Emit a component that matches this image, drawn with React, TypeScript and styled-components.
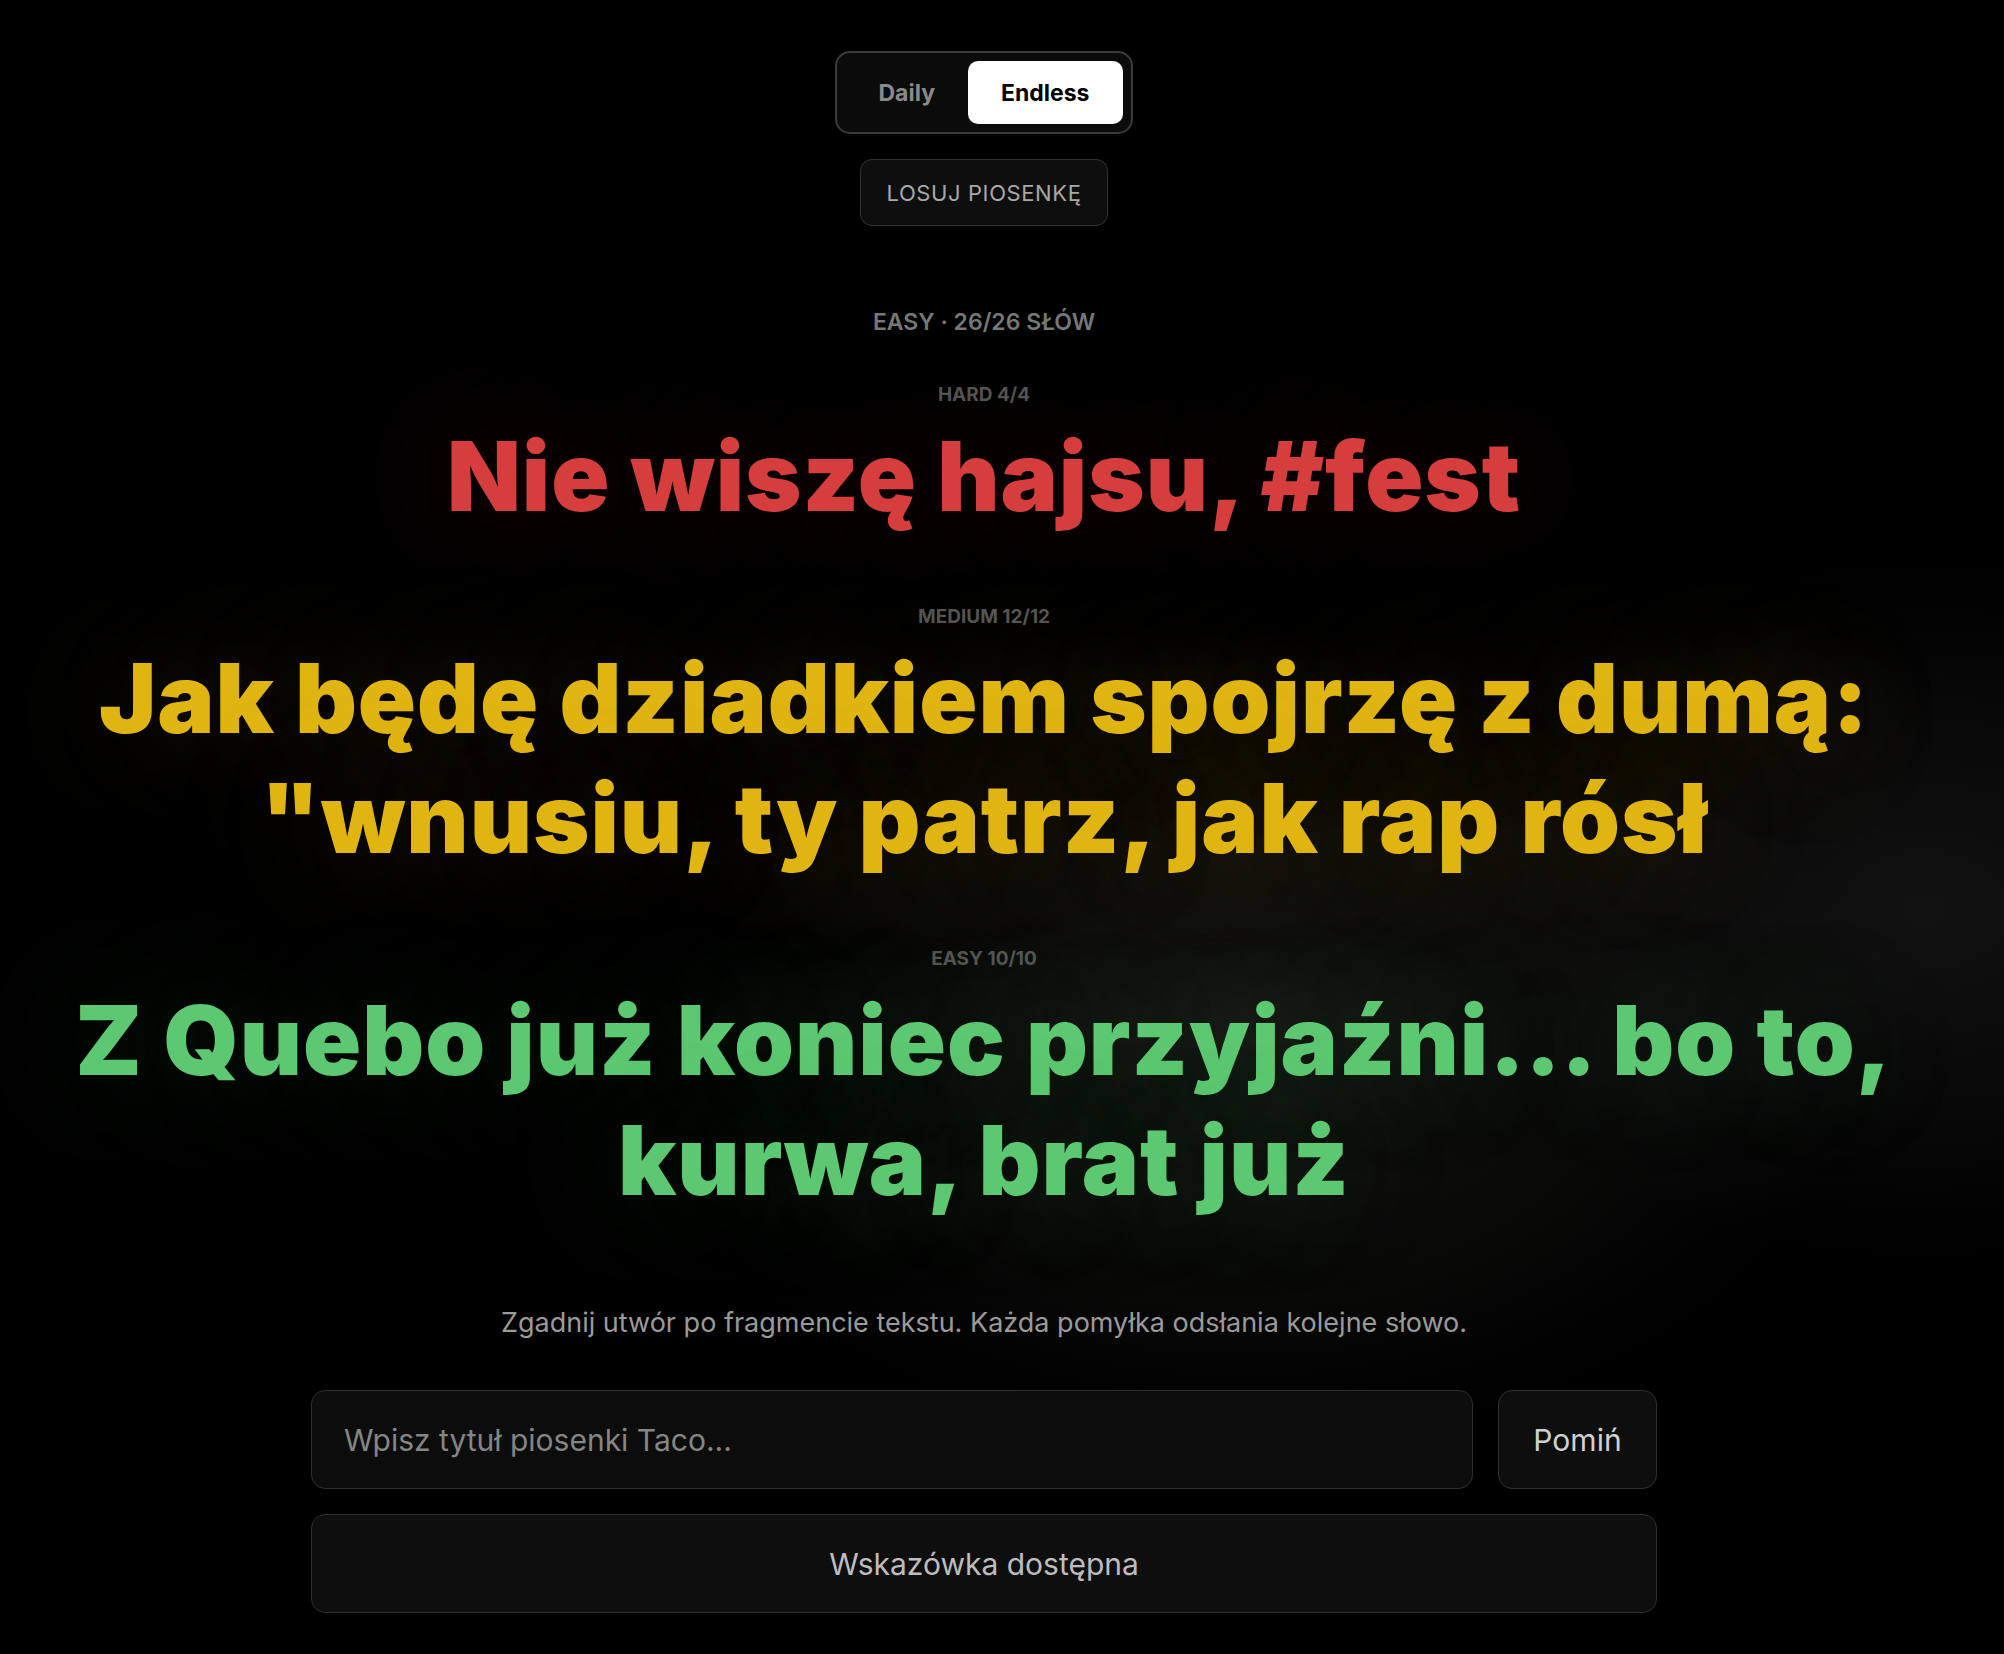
import styled, { createGlobalStyle } from 'styled-components';

const GlobalStyle = createGlobalStyle`
  html, body {
    margin: 0;
    padding: 0;
    background: #000;
  }
  body {
    font-family: Inter, "Noto Sans", sans-serif;
    color: #fff;
  }
`;

const Page = styled.main`
  min-height: 100vh;
  box-sizing: border-box;
  padding: 51px 36px 40px 0;
  display: flex;
  flex-direction: column;
  align-items: center;
  background:
    radial-gradient(ellipse 900px 600px at 62% 62%, rgba(40, 40, 36, 0.55), transparent 70%),
    radial-gradient(ellipse 700px 500px at 96% 55%, rgba(30, 30, 30, 0.6), transparent 70%),
    #000;
`;

const ModeSwitch = styled.div`
  display: flex;
  padding: 8px;
  border: 2px solid #3a3a3a;
  border-radius: 15px;
  background: #0b0b0b;
`;

const ModeButton = styled.button<{ $active?: boolean }>`
  height: 63px;
  padding: 0 33px;
  border: none;
  border-radius: 10px;
  font-family: Inter, sans-serif;
  font-size: 23px;
  font-weight: 700;
  cursor: pointer;
  background: ${({ $active }) => ($active ? '#fff' : 'transparent')};
  color: ${({ $active }) => ($active ? '#000' : '#8a8a8a')};
`;

const ShuffleButton = styled.button`
  margin-top: 25px;
  height: 67px;
  padding: 0 26px;
  border: 1.5px solid #333;
  border-radius: 12px;
  background: #0e0e0e;
  color: #a8a8a8;
  font-family: Inter, sans-serif;
  font-size: 22px;
  font-weight: 400;
  letter-spacing: 0.6px;
`;

const Summary = styled.div`
  margin-top: 82px;
  font-size: 23px;
  line-height: 29px;
  font-weight: 600;
  color: #777;
  text-transform: uppercase;
`;

const Lines = styled.div`
  margin-top: 46px;
  display: flex;
  flex-direction: column;
  align-items: center;
  gap: 69px;
  max-width: 1820px;
`;

const Section = styled.section`
  display: flex;
  flex-direction: column;
  align-items: center;
  gap: 10px;
`;

const Level = styled.div`
  font-size: 19px;
  line-height: 23px;
  font-weight: 700;
  color: #555;
  text-transform: uppercase;
`;

const Lyric = styled.div<{ $color: string }>`
  font-family: Inter, sans-serif;
  font-size: 96px;
  line-height: 120px;
  font-weight: 900;
  letter-spacing: 1px;
  text-align: center;
  color: ${({ $color }) => $color};
  text-shadow: 0 0 120px ${({ $color }) => $color}40;
`;

const Hint = styled.p`
  margin: 83px 0 0;
  font-size: 27px;
  line-height: 39px;
  color: #9a9a9a;
`;

const Form = styled.div`
  margin-top: 48px;
  width: 1346px;
  display: flex;
  flex-direction: column;
  gap: 25px;
`;

const Row = styled.div`
  display: flex;
  gap: 25px;
`;

const GuessInput = styled.input`
  flex: 1;
  height: 99px;
  box-sizing: border-box;
  padding: 0 32px;
  border: 1.5px solid #2e2e2e;
  border-radius: 14px;
  background: #0c0c0c;
  color: #ddd;
  font-family: Inter, sans-serif;
  font-size: 30px;
  outline: none;

  &::placeholder {
    color: #858585;
  }
`;

const ActionButton = styled.button<{ $wide?: boolean }>`
  height: 99px;
  box-sizing: border-box;
  width: ${({ $wide }) => ($wide ? '100%' : '159px')};
  border: 1.5px solid #2e2e2e;
  border-radius: 14px;
  background: #0e0e0e;
  color: ${({ $wide }) => ($wide ? '#bdbdbd' : '#d0d0d0')};
  font-family: Inter, sans-serif;
  font-size: 30px;
  font-weight: 400;
`;

const lyrics = [
  { level: 'Hard 4/4', text: 'Nie wiszę hajsu, #fest', color: '#d63e3e' },
  {
    level: 'Medium 12/12',
    text: 'Jak będę dziadkiem spojrzę z dumą: "wnusiu, ty patrz, jak rap rósł',
    color: '#e0b512',
  },
  {
    level: 'Easy 10/10',
    text: 'Z Quebo już koniec przyjaźni… bo to, kurwa, brat już',
    color: '#5cc871',
  },
];

const App: React.FC = () => {
  return (
    <>
      <GlobalStyle />
      <Page>
        <ModeSwitch>
          <ModeButton>Daily</ModeButton>
          <ModeButton $active>Endless</ModeButton>
        </ModeSwitch>
        <ShuffleButton>LOSUJ PIOSENKĘ</ShuffleButton>

        <Summary>Easy · 26/26 słów</Summary>

        <Lines>
          {lyrics.map((line) => (
            <Section key={line.level}>
              <Level>{line.level}</Level>
              <Lyric $color={line.color}>{line.text}</Lyric>
            </Section>
          ))}
        </Lines>

        <Hint>Zgadnij utwór po fragmencie tekstu. Każda pomyłka odsłania kolejne słowo.</Hint>

        <Form>
          <Row>
            <GuessInput placeholder="Wpisz tytuł piosenki Taco..." />
            <ActionButton>Pomiń</ActionButton>
          </Row>
          <ActionButton $wide>Wskazówka dostępna</ActionButton>
        </Form>
      </Page>
    </>
  );
};

export default App;
